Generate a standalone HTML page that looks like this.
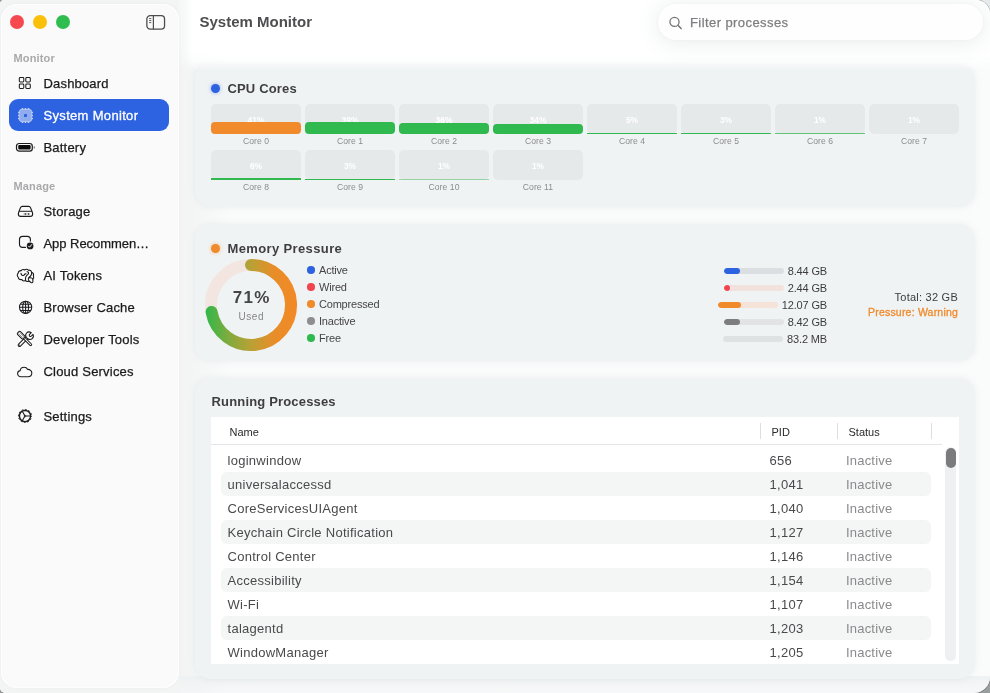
<!DOCTYPE html>
<html lang="en">
<head>
<meta charset="utf-8">
<title>System Monitor</title>
<style>
*{box-sizing:border-box;margin:0;padding:0}
html,body{width:990px;height:693px;overflow:hidden}
body{background:#9b9e9f;font-family:"Liberation Sans",sans-serif;color:#1d1d1f;-webkit-font-smoothing:antialiased}
#corner{position:absolute;right:0;top:0;width:16px;height:16px;background:#e6eaeb}
#win{position:absolute;left:0;top:0;width:990px;height:693px;border-radius:4px 14px 16px 5px;background:#fafbfb;overflow:hidden;will-change:transform;box-shadow:0 0 0 .6px rgba(60,60,60,.5)}
#topfade{position:absolute;left:179px;top:0;width:811px;height:72px;z-index:3;background:linear-gradient(#fff 0,#fff 50px,rgba(255,255,255,.75) 60px,rgba(255,255,255,0) 71px);-webkit-mask-image:linear-gradient(90deg,rgba(0,0,0,.25) 0,rgba(0,0,0,.4) 6px,#000 14px);mask-image:linear-gradient(90deg,rgba(0,0,0,.25) 0,rgba(0,0,0,.4) 6px,#000 14px)}
#sideshadow{position:absolute;left:0;top:0;width:230px;height:693px;background:linear-gradient(90deg,#f3f5f5 0,#f3f5f5 190px,rgba(245,247,247,0) 230px)}
#botshadow{position:absolute;left:180px;top:676px;width:810px;height:17px;background:linear-gradient(rgba(238,241,242,.9),rgba(244,246,247,.5))}
/* sidebar */
#sidebar{position:absolute;left:1px;top:4px;width:178px;height:684px;border-radius:16px;background:#fafafa;box-shadow:inset 0 0 0 1px #fefefe,0 0 5px rgba(0,0,0,.03);z-index:4}
.tl{position:absolute;top:11px;width:14px;height:14px;border-radius:50%}
.sec{position:absolute;left:12.5px;font-size:11px;font-weight:700;color:#a9a9ab;letter-spacing:.15px;line-height:14px}
.item{position:absolute;left:8px;width:160px;height:32px;border-radius:9px;line-height:32px;font-size:13px;color:#1a1a1a;padding-left:34.5px;padding-top:.7px;white-space:nowrap;-webkit-text-stroke:.25px #1a1a1a}
.item.sel{background:#2d62e1;color:#fff;-webkit-text-stroke:.3px #fff}
.item svg{position:absolute;left:6px;top:6px;width:20px;height:20px;overflow:visible}
/* cards */
.card{position:absolute;left:195px;width:780px;border-radius:16px;background:#f0f3f4;box-shadow:0 0 7px rgba(150,165,170,.14)}
.h{position:absolute;left:32px;font-size:13px;font-weight:700;color:#3e3e40;line-height:16px;white-space:nowrap}
.dot{position:absolute;width:9px;height:9px;border-radius:50%}
.core{position:absolute;width:90px;height:30px;border-radius:5px;background:#e6e9ea}
.core i{position:absolute;left:0;bottom:0;width:90px;border-radius:4px;background:#30b94e}
.core b{position:absolute;left:0;top:.8px;width:90px;line-height:30px;text-align:center;font-size:8.4px;color:#fff;font-weight:700}
.cl{position:absolute;width:90px;text-align:center;font-size:8.6px;color:#8b8b8e;line-height:12px;letter-spacing:.05px;margin-top:.4px}
.lg{position:absolute;left:124px;font-size:11px;color:#454547;line-height:14px;white-space:nowrap;letter-spacing:-.2px}
.lg i{position:absolute;left:-12px;top:3.5px;width:7.5px;height:7.5px;border-radius:50%}
.mv{position:absolute;right:148px;font-size:11px;color:#3c3c3e;line-height:14px;white-space:nowrap;text-align:right;letter-spacing:-.15px}
.mrow{position:absolute;right:148px;display:flex;align-items:center;gap:4px;height:13px;font-size:11px;color:#3c3c3e;line-height:14px;white-space:nowrap;letter-spacing:-.15px}
.mb{position:relative;flex:none;width:60px;height:6px;border-radius:3px;overflow:hidden}
.mb i{position:absolute;left:0;top:0;height:6px;border-radius:3px}
/* table */
#tbl{position:absolute;left:16px;top:39px;width:748px;height:247px;background:#fff;overflow:hidden}
.th{position:absolute;top:8px;font-size:11px;color:#2a2a2c;line-height:14px}
.vs{position:absolute;top:6px;width:1px;height:16px;background:#dedede}
.row{position:absolute;left:10px;width:710px;height:24px;border-radius:6px;font-size:13px;line-height:24px;color:#4a4a4c;letter-spacing:.27px;white-space:nowrap}
.row.alt{background:#f4f5f5}
.row span{position:absolute;top:.5px}
.row .n{left:6.5px}
.row .p{left:548.5px}
.row .s{left:625px;color:#8a8a8c;letter-spacing:.2px}
</style>
</head>
<body>
<div id="corner"></div>
<div id="win">
<div id="topfade"></div>
<div id="sideshadow"></div>
<div id="botshadow"></div>

<!-- SIDEBAR -->
<div id="sidebar">
  <div class="tl" style="left:9px;background:#f5484f"></div>
  <div class="tl" style="left:32px;background:#fbc10a"></div>
  <div class="tl" style="left:55px;background:#2fbd4f"></div>
  <svg style="position:absolute;left:144px;top:10px" width="22" height="18" viewBox="0 0 22 18"><rect x="1.85" y="1.65" width="17.7" height="13.5" rx="3.4" fill="none" stroke="#4c4c4e" stroke-width="1.3"/><line x1="8.4" y1="1.65" x2="8.4" y2="15.15" stroke="#4c4c4e" stroke-width="1.2"/><path d="M4.1 4.6h2.2M4.1 6.6h2.2M4.1 8.6h2.2" stroke="#4c4c4e" stroke-width=".9"/></svg>

  <div class="sec" style="top:47px">Monitor</div>
  <div class="item" style="top:63px;letter-spacing:0.17px"><svg viewBox="0 0 20 20"><g fill="none" stroke="#1c1c1e" stroke-width="1.05"><rect x="4.3" y="4.5" width="4.5" height="4.5" rx=".95"/><rect x="10.8" y="4.5" width="4.5" height="4.5" rx=".95"/><rect x="4.3" y="11" width="4.5" height="4.5" rx=".95"/><rect x="10.8" y="11" width="4.5" height="4.5" rx=".95"/></g></svg>Dashboard</div>
  <div class="item sel" style="top:95px;letter-spacing:0.32px"><svg viewBox="0 0 20 20"><g stroke="#fff" stroke-width="1.5"><path d="M7.5 3.3v1.4M10.5 3.3v1.4M13.5 3.3v1.4M7.5 16.3v1.4M10.5 16.3v1.4M13.5 16.3v1.4M3.3 7.5h1.4M3.3 10.5h1.4M3.3 13.5h1.4M16.3 7.5h1.4M16.3 10.5h1.4M16.3 13.5h1.4"/></g><rect x="4.1" y="4.1" width="12.8" height="12.8" rx="2.6" fill="#2d62e1"/><rect x="4.1" y="4.1" width="12.8" height="12.8" rx="2.6" fill="#fff" fill-opacity=".47"/><rect x="4.4" y="4.4" width="12.2" height="12.2" rx="2.4" fill="none" stroke="#fff" stroke-opacity=".45" stroke-width=".7"/><rect x="9" y="9.1" width="3" height="3" rx=".4" fill="#2d62e1"/></svg>System Monitor</div>
  <div class="item" style="top:127px;letter-spacing:0.2px"><svg viewBox="0 0 20 20"><rect x="1.5" y="6.5" width="15.8" height="7.7" rx="2.7" fill="none" stroke="#1c1c1e" stroke-width="1.2"/><rect x="3.3" y="8.1" width="12.3" height="4.5" rx="1.1" fill="#0c0c0c"/><rect x="18.6" y="9.3" width="1.3" height="2.3" rx=".6" fill="#1c1c1e" fill-opacity=".55"/></svg>Battery</div>
  <div class="sec" style="top:175px">Manage</div>
  <div class="item" style="top:191px;letter-spacing:0.2px"><svg viewBox="0 0 20 20"><g fill="none" stroke="#1c1c1e" stroke-width="1.15" stroke-linejoin="round"><path d="M7.400 5.300H13.600Q15.000 5.300 15.500 6.600L17.300 11.200Q17.600 12.000 17.600 12.700V13.200Q17.600 15.400 15.400 15.400H5.600Q3.400 15.400 3.400 13.200V12.700Q3.400 12.000 3.700 11.200L5.500 6.600Q6.000 5.300 7.400 5.300Z"/><path d="M4.300 10.300H16.700" stroke-width="1"/></g><circle cx="10.400" cy="12.900" r=".75" fill="#1c1c1e"/><circle cx="13.700" cy="12.900" r=".75" fill="#1c1c1e"/><path d="M8.400 12.900h6" stroke="#1c1c1e" stroke-opacity=".35" stroke-width="1.100"/></svg>Storage</div>
  <div class="item" style="top:223px;letter-spacing:-0.05px"><svg viewBox="0 0 20 20"><rect x="4.500" y="3.400" width="10.900" height="11.000" rx="3.100" fill="none" stroke="#1c1c1e" stroke-width="1.150"/><circle cx="15.100" cy="12.900" r="4.400" fill="#fafafa"/><circle cx="15.100" cy="12.900" r="3.350" fill="#1c1c1e"/><path d="M13.500 13.100l1.100 1.100 2.100-2.600" fill="none" stroke="#fff" stroke-width="1" stroke-linecap="round" stroke-linejoin="round"/></svg>App Recommen…</div>
  <div class="item" style="top:255px;letter-spacing:0.2px"><svg viewBox="0 0 20 20"><g fill="none" stroke="#1c1c1e" stroke-width="1.100" stroke-linecap="round" stroke-linejoin="round"><path d="M6.200 5.600C7.000 4.400 8.800 4.200 9.600 5.000C10.600 4.000 12.600 4.000 13.400 5.200C15.000 4.900 16.400 5.800 16.600 7.300C18.000 7.800 18.900 9.400 18.400 10.900C18.900 12.000 18.600 13.400 17.800 14.000L17.900 16.400C17.900 17.600 16.900 18.100 16.000 17.500L14.000 16.000C13.000 16.600 11.400 16.500 10.600 15.600C9.200 16.200 7.400 15.800 6.800 14.600C5.000 14.800 3.400 13.800 3.200 12.200C2.000 11.200 2.000 9.200 3.200 8.200C3.200 6.600 4.600 5.400 6.200 5.600Z"/><path d="M12.000 6.700C13.600 6.500 14.200 8.600 12.700 9.600C11.200 10.600 10.000 12.200 10.600 15.600M6.000 8.400C6.200 10.000 7.600 10.900 9.000 10.300C9.300 9.200 10.200 8.700 11.000 8.900M16.600 7.300C16.900 9.800 15.400 11.600 13.700 12.600C13.100 13.500 13.200 15.000 14.000 16.000M14.800 13.000C15.800 12.500 17.000 12.900 17.800 14.000"/></g></svg>AI Tokens</div>
  <div class="item" style="top:287px;letter-spacing:0.2px"><svg viewBox="0 0 20 20"><g fill="none" stroke="#1c1c1e" stroke-width="1.05"><circle cx="10.6" cy="10.3" r="6.15"/><ellipse cx="10.6" cy="10.3" rx="2.9" ry="6.15"/><path d="M10.6 4.1v12.4M4.45 10.3h12.3M5.4 7.2h10.4M5.4 13.4h10.4"/></g></svg>Browser Cache</div>
  <div class="item" style="top:319px;letter-spacing:0.2px"><svg viewBox="0 0 20 20"><g fill="none" stroke-linecap="round" stroke-linejoin="round"><path d="M12.000 8.600L4.500 16.100" stroke="#1c1c1e" stroke-width="3.700"/><path d="M12.000 8.600L4.500 16.100" stroke="#fafafa" stroke-width="1.600"/><circle cx="4.500" cy="16.100" r=".6" fill="#1c1c1e"/><path d="M16.300 3.700l-2.100 2.100.300 1.400 1.400.300 2.100-2.100c.700 1.500.400 3.200-.800 4.200-1.300 1.100-3.100 1.100-4.400.200l-1.500-1.500c-.900-1.300-.800-3.100.300-4.300 1.100-1.200 3.200-1.200 4.700-.300z" fill="#fafafa" stroke="#1c1c1e" stroke-width="1.050"/><g transform="translate(6.300 6.300) rotate(-45)"><rect x="-2" y="-4.300" width="4" height="8.200" rx="1.200" fill="#fafafa" stroke="#1c1c1e" stroke-width="1.050"/><path d="M-.7-3v5.600M.7-3v5.600" stroke="#1c1c1e" stroke-opacity=".55" stroke-width=".7"/><rect x="-1" y="3.900" width="2" height="10.300" rx=".9" fill="#fafafa" stroke="#1c1c1e" stroke-width="1"/></g></g></svg>Developer Tools</div>
  <div class="item" style="top:351px;letter-spacing:0.2px"><svg viewBox="0 0 20 20"><path d="M6.000 15.700c-1.900.000-3.400-1.300-3.400-3.100.000-1.600 1.100-2.800 2.600-3.000.200-2.000 1.900-3.300 3.900-3.300 1.600.000 2.900.800 3.600 2.100 2.300-.100 4.100 1.500 4.100 3.600.000 2.100-1.700 3.700-3.900 3.700z" fill="none" stroke="#1c1c1e" stroke-width="1.1" stroke-linejoin="round"/></svg>Cloud Services</div>
  <div class="item" style="top:396px;letter-spacing:0.2px"><svg viewBox="0 0 20 20"><g fill="none" stroke="#1c1c1e"><circle cx="10" cy="10" r="6.55" stroke-width="1" stroke-dasharray="1.715 1.715" stroke-dashoffset=".85"/><circle cx="10" cy="10" r="5.6" stroke-width="1.45"/><path d="M10 10h5.300M10 10l-2.750-4.700M10 10l-2.750 4.700" stroke-width="1.1"/></g><circle cx="10" cy="10" r="1.3" fill="#1c1c1e" fill-opacity=".6"/></svg>Settings</div>
</div>

<!-- TOOLBAR -->
<div style="position:absolute;z-index:5;left:199.5px;top:12px;font-size:15px;font-weight:700;color:#4e4e50;line-height:20px;white-space:nowrap">System Monitor</div>
<div style="position:absolute;z-index:5;left:658px;top:4px;width:325px;height:36px;border-radius:18px;background:#fefefe;box-shadow:0 2px 20px 2px rgba(90,110,115,.115),0 0 3px rgba(0,0,0,.03)">
  <svg style="position:absolute;left:10px;top:10.5px" width="16" height="16" viewBox="0 0 16 16"><circle cx="6.5" cy="6.9" r="4.55" fill="none" stroke="#767678" stroke-width="1.3"/><line x1="9.9" y1="10.3" x2="13.1" y2="13.6" stroke="#767678" stroke-width="1.5" stroke-linecap="round"/></svg>
  <div style="position:absolute;left:32px;top:10.5px;font-size:13px;color:#7e7e80;line-height:16px;letter-spacing:.42px;-webkit-text-stroke:.25px #7e7e80;white-space:nowrap">Filter processes</div>
</div>

<!-- CPU CARD -->
<div class="card" id="cpu" style="top:64px;height:143px">
  <div class="dot" style="left:15.5px;top:19.5px;background:#2d62e1;box-shadow:0 0 4px rgba(45,98,225,.45)"></div>
  <div class="h" style="top:17px;left:32.5px;letter-spacing:.15px">CPU Cores</div>
  <div class="core" style="left:16px;top:40px"><b>41%</b><i style="height:12.3px;background:#f08a2b"></i></div><div class="cl" style="left:16px;top:71px">Core 0</div>
  <div class="core" style="left:110px;top:40px"><b>39%</b><i style="height:11.7px"></i></div><div class="cl" style="left:110px;top:71px">Core 1</div>
  <div class="core" style="left:204px;top:40px"><b>36%</b><i style="height:10.8px"></i></div><div class="cl" style="left:204px;top:71px">Core 2</div>
  <div class="core" style="left:298px;top:40px"><b>34%</b><i style="height:10.2px"></i></div><div class="cl" style="left:298px;top:71px">Core 3</div>
  <div class="core" style="left:392px;top:40px"><b>5%</b><i style="border-radius:0;height:1.5px"></i></div><div class="cl" style="left:392px;top:71px">Core 4</div>
  <div class="core" style="left:486px;top:40px"><b>3%</b><i style="border-radius:0;height:1px"></i></div><div class="cl" style="left:486px;top:71px">Core 5</div>
  <div class="core" style="left:580px;top:40px"><b>1%</b><i style="border-radius:0;height:1px;opacity:.75"></i></div><div class="cl" style="left:580px;top:71px">Core 6</div>
  <div class="core" style="left:674px;top:40px"><b>1%</b></div><div class="cl" style="left:674px;top:71px">Core 7</div>
  <div class="core" style="left:16px;top:86px"><b>6%</b><i style="border-radius:0;height:1.8px"></i></div><div class="cl" style="left:16px;top:117px">Core 8</div>
  <div class="core" style="left:110px;top:86px"><b>3%</b><i style="border-radius:0;height:1px"></i></div><div class="cl" style="left:110px;top:117px">Core 9</div>
  <div class="core" style="left:204px;top:86px"><b>1%</b><i style="border-radius:0;height:1px;opacity:.45"></i></div><div class="cl" style="left:204px;top:117px">Core 10</div>
  <div class="core" style="left:298px;top:86px"><b>1%</b></div><div class="cl" style="left:298px;top:117px">Core 11</div>
</div>

<!-- MEMORY CARD -->
<div class="card" id="mem" style="top:224px;height:137px">
  <div class="dot" style="left:15.5px;top:19.5px;background:#f08a2b;box-shadow:0 0 4px rgba(240,138,43,.45)"></div>
  <div class="h" style="top:16.8px;left:32.5px;letter-spacing:.37px">Memory Pressure</div>
  <svg style="position:absolute;left:6px;top:31px" width="100" height="100" viewBox="0 0 100 100">
    <defs><linearGradient id="dg" gradientUnits="userSpaceOnUse" x1="4" y1="0" x2="96" y2="0"><stop offset="0" stop-color="#2db84b"/><stop offset=".25" stop-color="#7fab3e"/><stop offset=".5" stop-color="#b9a135"/><stop offset=".75" stop-color="#e88d29"/><stop offset="1" stop-color="#f28a26"/></linearGradient></defs>
    <circle cx="50" cy="50" r="40" fill="none" stroke="#f3e5e0" stroke-width="12"/>
    <path d="M50 10 A40 40 0 1 1 10.61 56.94" fill="none" stroke="url(#dg)" stroke-width="12" stroke-linecap="round"/>
  </svg>
  <div style="position:absolute;left:6px;top:64.3px;width:100px;text-align:center;font-size:17px;font-weight:700;color:#454547;line-height:20px;letter-spacing:1.3px;text-indent:1.3px">71%</div>
  <div style="position:absolute;left:6px;top:86.2px;width:100px;text-align:center;font-size:10px;color:#858587;line-height:14px;letter-spacing:.6px;text-indent:.6px">Used</div>
  <div class="lg" style="top:38.8px"><i style="background:#2d62e1"></i>Active</div>
  <div class="lg" style="top:55.8px"><i style="background:#f0454f"></i>Wired</div>
  <div class="lg" style="top:72.8px"><i style="background:#f08a2b"></i>Compressed</div>
  <div class="lg" style="top:89.8px"><i style="background:#8e8e90"></i>Inactive</div>
  <div class="lg" style="top:106.8px"><i style="background:#30b94e"></i>Free</div>
  <div class="mrow" style="top:40px"><div class="mb" style="background:#dcdfe2"><i style="width:16px;background:#2d62e1"></i></div><span>8.44 GB</span></div>
  <div class="mrow" style="top:57px"><div class="mb" style="background:#f3e1dd"><i style="width:6px;background:#f0454f"></i></div><span>2.44 GB</span></div>
  <div class="mrow" style="top:74px"><div class="mb" style="background:#f5e3da"><i style="width:23px;background:#f08a2b"></i></div><span>12.07 GB</span></div>
  <div class="mrow" style="top:91px"><div class="mb" style="background:#e1e3e4"><i style="width:16px;background:#7d7d7f"></i></div><span>8.42 GB</span></div>
  <div class="mrow" style="top:108px"><div class="mb" style="background:#dfe2e3"></div><span>83.2 MB</span></div>
  <div style="position:absolute;right:17px;top:65.7px;font-size:11px;color:#3c3c3e;line-height:14px;letter-spacing:.24px;white-space:nowrap">Total: 32 GB</div>
  <div style="position:absolute;right:17px;top:80.7px;font-size:10.5px;color:#f08a2b;line-height:14px;letter-spacing:.2px;white-space:nowrap;-webkit-text-stroke:.3px #f08a2b">Pressure: Warning</div>
</div>

<!-- PROCESSES CARD -->
<div class="card" id="proc" style="top:378px;height:301px">
  <div class="h" style="left:16.5px;top:15.8px;letter-spacing:.17px">Running Processes</div>
  <div id="tbl">
    <div class="th" style="left:18.5px">Name</div><div class="th" style="left:560.5px">PID</div><div class="th" style="left:637.5px">Status</div>
    <div class="vs" style="left:549px"></div><div class="vs" style="left:626px"></div><div class="vs" style="left:720px"></div>
    <div style="position:absolute;left:0;top:27px;width:731px;height:1px;background:#e4e6e7"></div>
    <div style="position:absolute;left:734px;top:30px;width:11px;height:214px;border-radius:5.5px;background:#eef0f1"></div>
    <div style="position:absolute;left:734.5px;top:31px;width:10px;height:20px;border-radius:5px;background:#7b7b7d"></div>
    <div class="row" style="top:31px"><span class="n">loginwindow</span><span class="p">656</span><span class="s">Inactive</span></div>
    <div class="row alt" style="top:55px"><span class="n">universalaccessd</span><span class="p">1,041</span><span class="s">Inactive</span></div>
    <div class="row" style="top:79px"><span class="n">CoreServicesUIAgent</span><span class="p">1,040</span><span class="s">Inactive</span></div>
    <div class="row alt" style="top:103px"><span class="n">Keychain Circle Notification</span><span class="p">1,127</span><span class="s">Inactive</span></div>
    <div class="row" style="top:127px"><span class="n">Control Center</span><span class="p">1,146</span><span class="s">Inactive</span></div>
    <div class="row alt" style="top:151px"><span class="n">Accessibility</span><span class="p">1,154</span><span class="s">Inactive</span></div>
    <div class="row" style="top:175px"><span class="n">Wi-Fi</span><span class="p">1,107</span><span class="s">Inactive</span></div>
    <div class="row alt" style="top:199px"><span class="n">talagentd</span><span class="p">1,203</span><span class="s">Inactive</span></div>
    <div class="row" style="top:223px"><span class="n">WindowManager</span><span class="p">1,205</span><span class="s">Inactive</span></div>
  </div>
</div>

</div>
</body>
</html>
